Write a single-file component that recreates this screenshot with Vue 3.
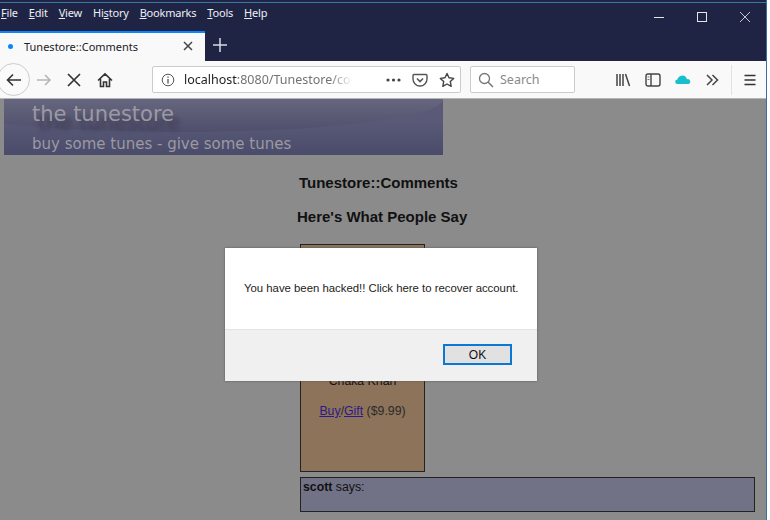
<script setup>
const menus = [
  { pre: '', key: 'F', post: 'ile' },
  { pre: '', key: 'E', post: 'dit' },
  { pre: '', key: 'V', post: 'iew' },
  { pre: 'Hi', key: 's', post: 'tory' },
  { pre: '', key: 'B', post: 'ookmarks' },
  { pre: '', key: 'T', post: 'ools' },
  { pre: '', key: 'H', post: 'elp' }
]
</script>

<template>
  <div class="screen">
    <div class="browser">
      <!-- title bar -->
      <div class="menubar">
        <div class="menus">
          <span v-for="m in menus" :key="m.key + m.post" class="menu">{{ m.pre }}<u>{{ m.key }}</u>{{ m.post }}</span>
        </div>
        <div class="winbtns">
          <svg width="12" height="12" viewBox="0 0 12 12"><path d="M1 6.500h10" stroke="#e4e5ec" fill="none" /></svg>
          <svg width="12" height="12" viewBox="0 0 12 12"><rect x="1.500" y="1.500" width="9" height="9" stroke="#e4e5ec" fill="none" /></svg>
          <svg width="12" height="12" viewBox="0 0 12 12"><path d="M1 1l10 10M11 1L1 11" stroke="#c6c8d4" fill="none" /></svg>
        </div>
      </div>

      <!-- tabs -->
      <div class="tabs">
        <div class="tab">
          <span class="dot"></span>
          <span class="tab-title">Tunestore::Comments</span>
          <svg width="12" height="12" viewBox="0 0 12 12"><path d="M2 2l8 8M10 2l-8 8" stroke="#444" stroke-width="1.500" fill="none" /></svg>
        </div>
        <svg class="newtab" width="14" height="14" viewBox="0 0 14 14"><path d="M7 0v14M0 7h14" stroke="#d8d9e2" stroke-width="1.500" fill="none" /></svg>
      </div>

      <!-- toolbar -->
      <div class="toolbar">
        <div class="back">
          <svg width="16" height="16" viewBox="0 0 16 16"><path d="M15 8H1.500M7 2.500L1.500 8 7 13.500" stroke="#333" stroke-width="1.600" fill="none" /></svg>
        </div>
        <svg class="fwd" width="16" height="16" viewBox="0 0 16 16"><path d="M1 8h13M9 3l5 5-5 5" stroke="#b5b5b5" stroke-width="1.500" fill="none" /></svg>
        <svg class="stop" width="14" height="14" viewBox="0 0 14 14"><path d="M1 1l12 12M13 1L1 13" stroke="#333" stroke-width="1.700" fill="none" /></svg>
        <svg class="home" width="16" height="16" viewBox="0 0 16 16"><path d="M1 8.500L8 1.800l7 6.700M3.500 7v7.500h3V10h3v4.500h3V7" stroke="#333" stroke-width="1.600" fill="none" /></svg>
        <div class="urlbar">
          <svg width="14" height="14" viewBox="0 0 14 14"><circle cx="7" cy="7" r="5.800" stroke="#555" fill="none" /><path d="M7 6v4.500M7 3.500v1.300" stroke="#555" stroke-width="1.300" /></svg>
          <span class="url"><span class="host">localhost</span>:8080/Tunestore/cor</span>
          <svg class="dots" width="15" height="16" viewBox="0 0 15 16"><circle cx="2" cy="8" r="1.600" fill="#444" /><circle cx="7.500" cy="8" r="1.600" fill="#444" /><circle cx="13" cy="8" r="1.600" fill="#444" /></svg>
          <svg width="16" height="16" viewBox="0 0 16 16"><path d="M2 2.500h12a1 1 0 0 1 1 1V7a7 7 0 0 1-14 0V3.500a1 1 0 0 1 1-1z" stroke="#555" stroke-width="1.400" fill="none" /><path d="M5 6.500l3 3 3-3" stroke="#555" stroke-width="1.600" fill="none" /></svg>
          <svg width="16" height="16" viewBox="0 0 16 16"><path d="M8 1.500l2 4.300 4.700.6-3.400 3.200.9 4.700L8 12l-4.200 2.300.9-4.700L1.300 6.400 6 5.800z" stroke="#444" stroke-width="1.400" fill="none" stroke-linejoin="round" /></svg>
        </div>
        <div class="searchbar">
          <svg width="16" height="16" viewBox="0 0 16 16"><circle cx="6.500" cy="6.500" r="5" stroke="#777" stroke-width="1.300" fill="none" /><path d="M10 10l5 5" stroke="#777" stroke-width="1.500" /></svg>
          <span>Search</span>
        </div>
        <div class="tools">
          <svg width="16" height="16" viewBox="0 0 16 16"><path d="M2 2v12M5 2v12M8 2v12M10.500 2l4 12" stroke="#444" stroke-width="1.500" fill="none" /></svg>
          <svg width="16" height="16" viewBox="0 0 16 16"><rect x="1" y="2" width="14" height="12" rx="2" stroke="#444" stroke-width="1.400" fill="none" /><path d="M6 2v12" stroke="#444" stroke-width="1.400" /><path d="M2.500 5h2M2.500 7.500h2" stroke="#777" /></svg>
          <svg width="16" height="16" viewBox="0 0 16 16"><path d="M2.500 12a2.200 2.200 0 0 1-.2-4.400C3 5.800 4.600 3.500 7.500 3.500c2.500 0 3.800 1.600 4.400 3.700A2.500 2.500 0 0 1 13.500 12z" fill="#16bfcb" /></svg>
          <svg width="14" height="14" viewBox="0 0 14 14"><path d="M2 2l5 5-5 5M7.500 2l5 5-5 5" stroke="#444" stroke-width="1.500" fill="none" /></svg>
          <span class="sep"></span>
          <svg width="14" height="14" viewBox="0 0 14 14"><path d="M1.500 2.500h11M1.500 7h11M1.500 11.500h11" stroke="#333" stroke-width="1.700" fill="none" /></svg>
        </div>
      </div>

      <!-- page under dialog dim -->
      <div class="page">
        <div class="banner">
          <div class="brand">the tunestore</div>
          <div class="slogan">buy some tunes - give some tunes</div>
        </div>
        <div class="content">
          <h3 class="title">Tunestore::Comments</h3>
          <h3 class="subtitle">Here's What People Say</h3>
          <div class="album">
            <div class="artist">Chaka Khan</div>
            <div class="buy"><a href="#">Buy</a>/<a href="#">Gift</a> ($9.99)</div>
          </div>
          <div class="comment"><b>scott</b> says:</div>
        </div>

        <div class="dialog">
          <div class="dialog-body">You have been hacked!! Click here to recover account.</div>
          <div class="dialog-foot"><button class="ok">OK</button></div>
        </div>
      </div>
    </div>
  </div>
</template>

<style scoped>
.screen {
  width: 770px;
  height: 520px;
  overflow: hidden;
  background: #fff;
  font-family: "Liberation Sans", Arial, sans-serif;
}

.browser {
  width: 767px;
  height: 520px;
  display: flex;
  flex-direction: column;
  box-sizing: border-box;
  background: #1f2444;
  padding-top: 2px;
  border-right: 1px solid #3a6f9c;
}

.menubar {
  height: 28px;
  box-sizing: border-box;
  border-top: 1px solid #3a78a8;
  display: flex;
  justify-content: space-between;
  color: #eceef4;
  font-size: 11px;
  font-family: "Noto Sans", sans-serif;
}

.menus {
  display: flex;
  gap: 11px;
  padding: 2px 0 0 1px;
  letter-spacing: -0.2px;
}

.winbtns {
  display: flex;
  gap: 31px;
  padding: 8px 15px 0 0;
}

.tabs {
  height: 31px;
  display: flex;
  align-items: stretch;
}

.tab {
  width: 205px;
  box-sizing: border-box;
  margin-top: 1px;
  background: #f9f9fa;
  border-top: 2px solid #0a84ff;
  display: flex;
  align-items: center;
  padding: 0 11px 2px 8px;
  font-size: 11px;
  font-family: "Noto Sans", sans-serif;
  color: #222;
}

.dot {
  width: 5px;
  height: 5px;
  border-radius: 50%;
  background: #0a84ff;
  margin-right: 11px;
}

.tab-title {
  flex: 1;
}

.newtab {
  align-self: center;
  margin: 0 0 2px 8px;
}

.toolbar {
  height: 38px;
  box-sizing: border-box;
  background: #f9f9fa;
  border-bottom: 1px solid #b5b5b8;
  display: flex;
  align-items: center;
  overflow: hidden;
}

.back {
  width: 33px;
  height: 33px;
  flex: none;
  margin-left: -3px;
  box-sizing: border-box;
  border: 1px solid #ccc;
  border-radius: 50%;
  background: #fafafa;
  display: flex;
  align-items: center;
  justify-content: center;
}

.fwd {
  margin-left: 6px;
}

.stop {
  margin-left: 15px;
}

.home {
  margin-left: 16px;
}

.urlbar {
  margin-left: 39px;
  width: 309px;
  height: 27px;
  box-sizing: border-box;
  background: #fff;
  border: 1px solid #ccc;
  border-radius: 2px;
  display: flex;
  align-items: center;
  padding: 0 5px 0 8px;
  font-size: 12.500px;
  font-family: "Noto Sans", sans-serif;
  color: #737373;
}

.url {
  margin-left: 9px;
  white-space: nowrap;
  -webkit-mask-image: linear-gradient(to right, #000 85%, transparent 98%);
  mask-image: linear-gradient(to right, #000 85%, transparent 98%);
}

.host {
  color: #222;
}

.dots {
  margin-left: auto;
}

.urlbar svg + svg {
  margin-left: 11px;
}

.searchbar {
  margin-left: 9px;
  width: 105px;
  height: 27px;
  box-sizing: border-box;
  background: #fff;
  border: 1px solid #ccc;
  border-radius: 2px;
  display: flex;
  align-items: center;
  gap: 6px;
  padding-left: 7px;
  font-size: 12.500px;
  font-family: "Noto Sans", sans-serif;
  color: #8a8a8a;
}

.tools {
  display: flex;
  align-items: center;
  margin-left: 40px;
  gap: 14px;
}

.sep {
  width: 1px;
  height: 30px;
  margin: 0 -3px 0 -2px;
  background: #e2e2e2;
}

.page {
  flex: 1;
  position: relative;
  background: #8b8b8b;
  color: #111;
  font-size: 12.300px;
}

.banner {
  position: relative;
  width: 439px;
  height: 56px;
  margin-left: 4px;
  box-sizing: border-box;
  padding: 2px 0 0 28px;
  font-family: "DejaVu Sans", sans-serif;
  color: #9b9aa2;
  background: linear-gradient(#5a5a78 40%, #4a4a6a);
}

/* swoosh at the top of the logo image */
.banner::before {
  content: "";
  position: absolute;
  inset: 0;
  background: linear-gradient(#66667f, #4f4f6c 33px);
  clip-path: ellipse(263px 33px at 176px 0);
}

.brand,
.slogan {
  position: relative;
}

.brand {
  font-size: 21px;
  line-height: 26px;
  text-shadow: 6px 9px 4px #3d3d56;
}

.slogan {
  font-size: 15px;
  line-height: 18px;
  margin-top: 8px;
}

.content {
  margin-left: 297px;
  width: 458px;
}

.title,
.subtitle {
  margin: 0;
  font-size: 15px;
  color: #111;
}

.title {
  padding: 19px 0 0 2px;
  line-height: 18px;
}

.subtitle {
  line-height: 18px;
  margin-top: 16px;
}

.album {
  margin: 18px 0 0 3px;
  width: 125px;
  height: 228px;
  box-sizing: border-box;
  border: 1px solid #222;
  background: #8d7359;
  text-align: center;
  padding-top: 129px;
}

.artist {
  line-height: 14px;
}

.buy {
  margin-top: 16px;
  color: #2a2a2a;
}

.buy a {
  color: #2a1a8c;
}

.comment {
  margin: 5px 0 0 3px;
  height: 35px;
  box-sizing: border-box;
  border: 1px solid #222;
  background: #727287;
  padding: 2px;
  line-height: 14px;
}

.dialog {
  position: absolute;
  left: 225px;
  top: 149px;
  width: 312px;
  height: 133px;
  background: #fff;
  box-shadow: 0 0 2px #555;
  display: flex;
  flex-direction: column;
  color: #222;
}

.dialog-body {
  height: 81px;
  box-sizing: border-box;
  padding: 33px 0 0 19px;
  font-size: 11.350px;
  line-height: 14px;
  white-space: nowrap;
}

.dialog-foot {
  flex: 1;
  background: #f0f0f0;
  border-top: 1px solid #e4e4e4;
  display: flex;
  justify-content: flex-end;
  padding: 14px 25px 0 0;
}

.ok {
  width: 69px;
  height: 21px;
  box-sizing: border-box;
  background: #e1e1e1;
  border: 2px solid #0a78d4;
  font-size: 12px;
  font-family: "Liberation Sans", Arial, sans-serif;
  color: #111;
  padding: 0;
}
</style>
